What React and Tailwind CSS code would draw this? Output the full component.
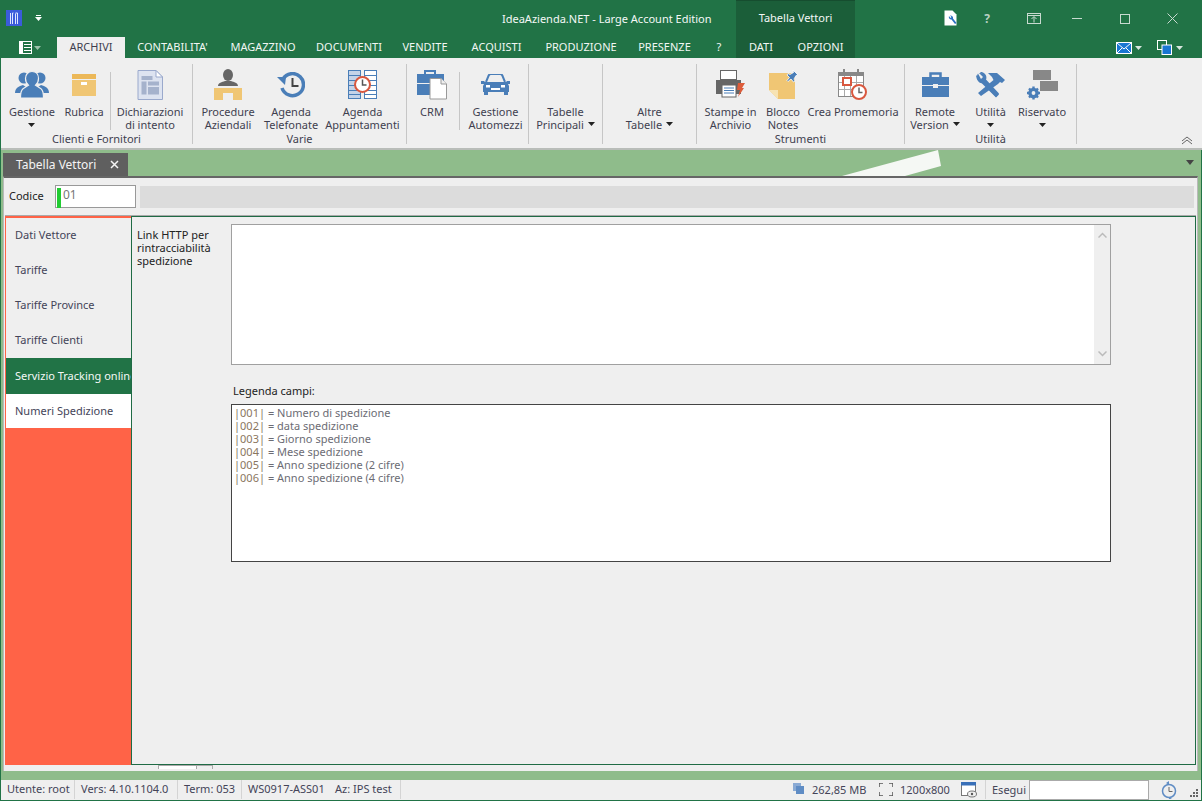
import React from "react";

const B = "#4a7eb8";
const T = "#f0c674";

const Caret = ({ c = "#222" }) => (
  <svg width="7" height="4" viewBox="0 0 7 4" className="inline-block"><path d="M0 0h7L3.5 4z" fill={c} /></svg>
);

const IconPeople = () => (
  <svg width="34" height="30" viewBox="0 0 34 30">
    <g fill={B}>
      <circle cx="9" cy="8" r="5.5" /><circle cx="25" cy="8" r="5.5" />
      <path d="M0 23c0-5 4-7 8-8l3 2v6z" /><path d="M34 23c0-5-4-7-8-8l-3 2v6z" />
    </g>
    <path d="M17 1.5c4 0 6.5 3 6.5 7 0 3-1.500 5.500-3 6.800l5.500 3.500c2 1.500 2.500 5 2.500 9.200H5.500c0-4.200.5-7.700 2.500-9.200l5.500-3.500c-1.500-1.300-3-3.800-3-6.800 0-4 2.500-7 6.500-7z" fill={B} stroke="#efefef" strokeWidth="1.2" />
  </svg>
);
const IconBox = () => (
  <svg width="26" height="24" viewBox="0 0 26 24">
    <rect x="1" y="1" width="24" height="5" fill="#ecb858" />
    <rect x="1" y="7" width="24" height="16" fill={T} />
    <rect x="10" y="9" width="6" height="3" fill="#fff" />
  </svg>
);
const IconDoc = () => (
  <svg width="26" height="30" viewBox="0 0 26 30">
    <path d="M1 .5h18l6.500 6.500v22.500H1z" fill="#dde3f0" stroke="#9aa9cc" />
    <path d="M19 .5V7h6.500z" fill="#fff" stroke="#9aa9cc" />
    <rect x="4.500" y="6" width="11" height="4" fill="#a5b2cc" /><rect x="4.500" y="11.500" width="5" height="13" fill="#a5b2cc" />
    <rect x="11" y="11.500" width="11" height="4" fill="#a5b2cc" /><rect x="11" y="17" width="11" height="7.500" fill="#a5b2cc" />
  </svg>
);
const IconDesk = () => (
  <svg width="29" height="32" viewBox="0 0 29 32">
    <ellipse cx="14" cy="6" rx="5" ry="6" fill="#666" />
    <path d="M4 17c0-3 4-4 7-5h6c3 1 7 2 7 5z" fill="#666" />
    <path d="M0 19h28v12H19v-7H9v7H0z" fill={T} />
  </svg>
);
const IconHistory = () => (
  <svg width="28" height="26" viewBox="0 0 28 26">
    <path d="M6 7a11 11 0 1 1-1 9" fill="none" stroke={B} strokeWidth="3.500" />
    <path d="M0 5h9l-1 8z" fill={B} />
    <path d="M15.500 6v8h6" fill="none" stroke="#444" strokeWidth="2" />
  </svg>
);
const IconPlanner = () => (
  <svg width="29" height="30" viewBox="0 0 29 30">
    <rect x=".5" y=".5" width="12" height="28" fill="#c4d3e8" stroke={B} />
    <rect x="16.500" y=".5" width="12" height="28" fill="#fff" stroke={B} />
    <path d="M1 5.500h11M1 10.500h11M1 15.500h11M1 20.500h11M1 24.500h11M17 5.500h11M17 10.500h11M17 15.500h11M17 20.500h11M17 24.500h11" stroke={B} />
    <circle cx="14.500" cy="14.500" r="7.500" fill="#fff" stroke="#d9583f" strokeWidth="2" />
    <path d="M14.500 9.500v5.500h4" fill="none" stroke="#555" strokeWidth="1.500" />
  </svg>
);
const IconCrm = () => (
  <svg width="30" height="31" viewBox="0 0 30 31">
    <path d="M8 5V2h10v3" fill="none" stroke={B} strokeWidth="2" />
    <rect x="0" y="5" width="27" height="9" fill={B} /><rect x="0" y="15" width="27" height="11" fill={B} />
    <path d="M13 9.500h11l5.500 5.500v15H13z" fill="#fff" stroke="#999" />
    <path d="M24 9.500V15h5.500" fill="#eee" stroke="#999" />
  </svg>
);
const IconCar = () => (
  <svg width="29" height="21" viewBox="0 0 29 21">
    <path d="M5 8l2.500-6c.3-1 1-2 2.500-2h9c1.500 0 2.200 1 2.500 2L24 8" fill="none" stroke={B} strokeWidth="2" />
    <path d="M0 7h3l1 1h21l1-1h3v3h-2l1 2v6h-1v3h-4v-3H7v3H3v-3H2v-6l1-2H0z" fill={B} />
    <rect x="5" y="11" width="4" height="2.500" fill="#fff" /><rect x="20" y="11" width="4" height="2.500" fill="#fff" />
    <rect x="10" y="14" width="9" height="2" fill="#fff" />
  </svg>
);
const IconPrinter = () => (
  <svg width="29" height="29" viewBox="0 0 29 29">
    <rect x="4.500" y=".5" width="16" height="9" fill="#fff" stroke="#666" />
    <path d="M0 10h25v14H0z" fill="#666" />
    <rect x="6" y="15" width="14" height="12" fill="#fff" stroke="#666" />
    <path d="M8 18h10M8 20.500h10M8 23h10" stroke={B} />
    <path d="M22 13h7l-3 5h2l-6 9 2-7h-3z" fill="#dd5c3a" />
  </svg>
);
const IconNote = () => (
  <svg width="31" height="31" viewBox="0 0 31 31">
    <path d="M1 4h26v26H10l-9-9z" fill={T} />
    <path d="M1 21h9v9z" fill="#f7e3b3" />
    <path d="M19 0h12v11H19z" fill="#fff" opacity="0" />
    <path d="M25 1l5 5-2 .5-2 3.500 1 2-1.500 1-2.500-3-3 2.500-1-1 2.500-3-2.500-2.500 1-1.500 2 1 3.500-2z" fill={B} stroke="#fff" strokeWidth=".8" />
  </svg>
);
const IconCal = () => (
  <svg width="30" height="31" viewBox="0 0 30 31">
    <rect x=".5" y="3.500" width="25" height="24" fill="#fff" stroke="#888" />
    <rect x="0" y="3" width="26" height="4" fill="#888" />
    <rect x="5" y="0" width="2" height="5" fill="#888" /><rect x="19" y="0" width="2" height="5" fill="#888" />
    <path d="M6.500 7v20M12.500 7v20M18.500 7v20M1 13.500h24M1 20.500h24" stroke="#aaa" />
    <rect x="5" y="9" width="8" height="7" fill="#fff" stroke="#d9583f" strokeWidth="2" />
    <circle cx="21" cy="23" r="7" fill="#fff" stroke="#d9583f" strokeWidth="2" />
    <path d="M21 18.500v5h3.500" fill="none" stroke="#666" strokeWidth="1.500" />
  </svg>
);
const IconCase = () => (
  <svg width="27" height="25" viewBox="0 0 27 25">
    <path d="M8.500 5V1.500h10V5" fill="none" stroke={B} strokeWidth="2.500" />
    <path d="M0 5h27v8H16v-1h-5v1H0z" fill={B} /><path d="M0 14h11v2h5v-2h11v11H0z" fill={B} />
  </svg>
);
const IconTools = () => (
  <svg width="30" height="26" viewBox="0 0 30 26">
    <path d="M2 1.500a6 6 0 0 0 3 9l15 15 3-3L9 8c1-3-1-7-6-7l4 4-2 2z" fill={B} transform="translate(0 0)" />
    <path d="M0 3l5 5 3-3-4-5c2-.5 5 1 6 3.500.5 1.500.5 3 0 4l13 14-3 3.500L7 11C4 12 .5 9 0 3z" fill={B} />
    <path d="M12 1h9l8 7-3 3-2-1-2 2L5 24l-3-3L17.500 8 16 5z" fill={B} />
  </svg>
);
const IconReserved = () => (
  <svg width="32" height="30" viewBox="0 0 32 30">
    <rect x="7" y="0" width="18" height="10" fill="#888" /><rect x="14" y="11" width="18" height="10" fill="#888" />
    <g fill="none" stroke={B}>
      <circle cx="7.500" cy="23" r="3.600" strokeWidth="3.400" />
      <path d="M7.500 16.500v3M7.500 26.500v3M1 23h3M11 23h3M3 18.500l2 2M10 25.500l2 2M3 27.500l2-2M10 20.500l2-2" strokeWidth="2.400" />
    </g>
  </svg>
);

const Rb = ({ w, icon, lines, caret, caretLine, iconH = 32 }) => (
  <div className={`${w} flex flex-col items-center shrink-0`}>
    <div className="h-[38px] flex items-center justify-center pt-[3px]">{icon}</div>
    <div className="mt-[3px] text-center leading-[13px] text-[#3f3f4f]">
      {lines.map((l, i) => (
        <div key={i} className="whitespace-nowrap h-[13px]">
          {l}
          {caret && caretLine === i && <span className="ml-[4px] relative top-[-2px]"><Caret /></span>}
        </div>
      ))}
      {caret && caretLine === undefined && <div className="h-[13px] flex items-center justify-center"><Caret /></div>}
    </div>
  </div>
);

const Sep = () => <div className="w-px h-[58px] mt-[8px] bg-[#c6c6c6] mx-[2px] shrink-0" />;

const Group = ({ w, label, children, last }) => (
  <div className={`${w} h-[80px] mt-[6px] flex flex-col border-r border-[#c6c6c6] shrink-0 relative`}>
    <div className="flex h-[67px]">{children}</div>
    {label && <div className="text-center leading-[13px] mt-[1px] text-[#3f3f4f]">{label}</div>}
  </div>
);

const Tab = ({ t, w, active }) => (
  <div className={`${w} h-[21px] shrink-0 flex items-center justify-center ${active ? "bg-[#efefef] text-[#3f3f4f]" : "text-[#f2f7f4]"}`}>{t}</div>
);

const Side = ({ t, cls = "bg-[#efefef] text-[#444458]", h = "h-[35px]" }) => (
  <div className={`${h} ${cls} pl-[9px] flex items-center whitespace-nowrap`}>{t}</div>
);

const legend = [
  ["|001|", "= Numero di spedizione"],
  ["|002|", "= data spedizione"],
  ["|003|", "= Giorno spedizione"],
  ["|004|", "= Mese spedizione"],
  ["|005|", "= Anno spedizione (2 cifre)"],
  ["|006|", "= Anno spedizione (4 cifre)"],
];

const StatusCell = ({ w, children, border = true }) => (
  <div className={`${w} h-[19px] flex items-center shrink-0 pl-[6px] whitespace-nowrap ${border ? "border-r border-[#d4d4d4]" : ""}`}>{children}</div>
);

export default function App() {
  return (
    <div className="w-[1202px] h-[801px] overflow-hidden bg-[#217346] flex flex-col text-[11px] font-['Noto_Sans',sans-serif] select-none">
      {/* title bar */}
      <div className="h-[37px] flex shrink-0">
        <div className="w-[736px] flex items-center relative text-[#f4f8f6]">
          <div className="ml-[6px] mt-[-2px] w-[16px] h-[16px] bg-[#3b5bdb] flex items-center justify-center">
            <svg width="10" height="12" viewBox="0 0 10 12"><path d="M1.500 12V1M3.500 12V1h1M6.500 12V1.500M6.500 1h2v11" stroke="#dfe6ff" fill="none" /></svg>
          </div>
          <div className="ml-[13px] mt-[-2px] flex flex-col items-center gap-[1px]">
            <div className="w-[5px] h-px bg-white" />
            <Caret c="#fff" />
          </div>
          <div className="ml-[460px] mt-[1px] whitespace-nowrap">IdeaAzienda.NET - Large Account Edition</div>
        </div>
        <div className="w-[119px] bg-[#1b5e39] border-t border-[#164d2f] flex items-center justify-center text-[#f4f8f6] pb-[2px]">Tabella Vettori</div>
        <div className="flex-1 flex items-center relative">
          <div className="ml-[89px] mt-[-1px] w-[14px] h-[16px]">
            <svg width="14" height="16" viewBox="0 0 14 16"><path d="M.5.500h8l4 4v11H.5z" fill="#fff" /><path d="M5 6a2.500 2.500 0 0 0 2.500 3.500L11 14l1.500-1L9 8.500A2.500 2.500 0 0 0 6 5.500l1.500 1.500L6.500 8z" fill="#2a6fc0" /></svg>
          </div>
          <div className="ml-[25px] text-[12px] font-bold text-[#b8d0c2] w-[8px] text-center">?</div>
          <div className="ml-[36px] w-[14px]">
            <svg width="14" height="12" viewBox="0 0 14 12"><rect x=".5" y=".5" width="13" height="10" fill="none" stroke="#c8dad0" /><path d="M1 2.500h12M7 9.500V4M4.500 6L7 3.500 9.500 6" stroke="#c8dad0" fill="none" /></svg>
          </div>
          <div className="ml-[31px] w-[10px] h-px bg-[#c8dad0]" />
          <div className="ml-[38px] w-[10px] h-[10px] border border-[#c8dad0]" />
          <div className="ml-[37px] w-[11px]">
            <svg width="11" height="11" viewBox="0 0 11 11"><path d="M.5.500l10 10M10.500.500l-10 10" stroke="#c8dad0" /></svg>
          </div>
        </div>
      </div>

      {/* tabs row */}
      <div className="h-[21px] flex shrink-0">
        <div className="w-[57px] flex items-center justify-start shrink-0 pl-[19px] gap-[2px]">
          <svg width="13" height="13" viewBox="0 0 13 13"><rect x=".5" y=".5" width="12" height="12" fill="none" stroke="#fff" /><rect x="1" y="1" width="3" height="11" fill="#fff" /><path d="M5 3.500h7M5 6.500h7M5 9.500h7" stroke="#fff" /></svg>
          <Caret c="#9cc0aa" />
        </div>
        <Tab t="ARCHIVI" w="w-[68px]" active />
        <Tab t="CONTABILITA'" w="w-[95px]" />
        <Tab t="MAGAZZINO" w="w-[86px]" />
        <Tab t="DOCUMENTI" w="w-[86px]" />
        <Tab t="VENDITE" w="w-[66px]" />
        <Tab t="ACQUISTI" w="w-[77px]" />
        <Tab t="PRODUZIONE" w="w-[92px]" />
        <Tab t="PRESENZE" w="w-[75px]" />
        <Tab t="?" w="w-[34px]" />
        <div className="w-[119px] bg-[#1b5e39] flex text-[#f2f7f4] shrink-0">
          <div className="w-[50px] flex items-center justify-center">DATI</div>
          <div className="w-[69px] flex items-center justify-center">OPZIONI</div>
        </div>
        <div className="flex-1 flex items-center justify-end pr-[19px]">
          <svg width="16" height="12" viewBox="0 0 16 12"><rect width="16" height="12" fill="#1976d2" /><rect x=".5" y=".5" width="15" height="11" fill="none" stroke="#fff" /><path d="M1 1l7 6 7-6M1 11l5-5M15 11l-5-5" stroke="#fff" fill="none" /></svg>
          <span className="ml-[3px]"><Caret c="#d8e6de" /></span>
          <div className="ml-[15px]">
            <svg width="15" height="15" viewBox="0 0 15 15"><rect x=".5" y=".5" width="9" height="9" fill="#217346" stroke="#fff" /><rect x="5" y="5" width="9.500" height="9.500" fill="#1976d2" stroke="#fff" /></svg>
          </div>
          <span className="ml-[4px]"><Caret c="#d8e6de" /></span>
        </div>
      </div>

      {/* ribbon */}
      <div className="h-[92px] ml-px w-[1201px] bg-[#efefef] flex shrink-0 border-b-2 border-[#b9bdb9] relative">
        <Group w="w-[192px]" label="Clienti e Fornitori">
          <div className="w-[3px]" />
          <Rb w="w-[56px]" icon={<IconPeople />} lines={["Gestione"]} caret />
          <Rb w="w-[48px]" icon={<IconBox />} lines={["Rubrica"]} />
          <Sep />
          <Rb w="w-[74px]" icon={<IconDoc />} lines={["Dichiarazioni", "di intento"]} />
        </Group>
        <Group w="w-[214px]" label="Varie">
          <Rb w="w-[70px]" icon={<IconDesk />} lines={["Procedure", "Aziendali"]} />
          <Rb w="w-[56px]" icon={<IconHistory />} lines={["Agenda", "Telefonate"]} />
          <Rb w="w-[87px]" icon={<IconPlanner />} lines={["Agenda", "Appuntamenti"]} />
        </Group>
        <Group w="w-[122px]">
          <Rb w="w-[50px]" icon={<IconCrm />} lines={["CRM"]} />
          <Sep />
          <Rb w="w-[67px]" icon={<IconCar />} lines={["Gestione", "Automezzi"]} />
        </Group>
        <Group w="w-[74px]">
          <Rb w="w-[73px]" icon={null} lines={["Tabelle", "Principali"]} caret caretLine={1} />
        </Group>
        <Group w="w-[94px]">
          <Rb w="w-[93px]" icon={null} lines={["Altre", "Tabelle"]} caret caretLine={1} />
        </Group>
        <Group w="w-[208px]" label="Strumenti">
          <Rb w="w-[67px]" icon={<IconPrinter />} lines={["Stampe in", "Archivio"]} />
          <Rb w="w-[38px]" icon={<IconNote />} lines={["Blocco", "Notes"]} />
          <Rb w="w-[102px]" icon={<IconCal />} lines={["Crea Promemoria"]} />
        </Group>
        <Group w="w-[172px]" label="Utilità">
          <Rb w="w-[60px]" icon={<IconCase />} lines={["Remote", "Version"]} caret caretLine={1} />
          <Rb w="w-[51px]" icon={<IconTools />} lines={["Utilità"]} caret />
          <Rb w="w-[52px]" icon={<IconReserved />} lines={["Riservato"]} caret />
        </Group>
        <div className="flex-1 flex items-end justify-end pr-[9px] pb-[3px]">
          <svg width="12" height="9" viewBox="0 0 12 9"><path d="M1 5l5-4 5 4M1 8l5-4 5 4" fill="none" stroke="#666" /></svg>
        </div>
      </div>

      {/* workspace */}
      <div className="flex-1 ml-px mr-px bg-[#8fbc8b] flex flex-col min-h-0">
        {/* doc tabs strip */}
        <div className="h-[26px] shrink-0 flex items-end relative pl-[2px]">
          <div className="w-[125px] h-[23px] bg-[#5f5f5f] text-[#f4f4f4] flex items-center pl-[13px] text-[12px]">
            <span className="whitespace-nowrap">Tabella Vettori</span>
            <svg className="ml-[14px]" width="9" height="9" viewBox="0 0 9 9"><path d="M1 1l7 7M8 1L1 8" stroke="#f4f4f4" strokeWidth="1.500" /></svg>
          </div>
          <svg className="absolute left-[841px] top-0" width="100" height="26" viewBox="0 0 100 26"><path d="M96 0l3 16-36 10H0z" fill="#f5f8f4" /></svg>
          <div className="absolute right-[7px] top-[10px]"><svg width="8" height="5" viewBox="0 0 8 5"><path d="M0 0h8L4 5z" fill="#444" /></svg></div>
        </div>

        {/* form */}
        <div className="ml-[2px] mr-[3px] h-[595px] shrink-0 bg-[#efefef] border-t-2 border-[#666] border-x border-x-[#b9b9b9] flex flex-col">
          <div className="h-[38px] shrink-0 flex items-center border-b border-[#aaa] pl-[4px] mx-px">
            <span className="w-[46px] text-[#222]">Codice</span>
            <div className="w-[81px] h-[23px] border border-[#999] bg-white flex pt-[1px] pl-px relative">
              <div className="w-[4px] h-[20px] mt-[1px] bg-[#22cc33]" />
              <span className="ml-[2px] leading-[15px] text-[#777] text-[12px]">01</span>
            </div>
            <div className="ml-[4px] w-[1054px] h-[22px] bg-[#dcdcdc]" />
          </div>

          <div className="flex-1 flex min-h-0 ml-px">
            <div className="w-[126px] shrink-0 bg-[#ff6347] pl-[1px] pt-px flex flex-col">
              <Side t="Dati Vettore" h="h-[35px] mt-[1px]" />
              <Side t="Tariffe" />
              <Side t="Tariffe Province" />
              <Side t="Tariffe Clienti" />
              <Side t="Servizio Tracking online" cls="bg-[#217346] text-[#f4f8f6]" h="h-[36px]" />
              <Side t="Numeri Spedizione" cls="bg-white text-[#444458]" h="h-[34px]" />
            </div>
            <div className="flex-1 border border-[#1f6b45] mr-px bg-[#efefef] pt-[7px] pl-[99px]">
              <div className="flex relative">
                <div className="absolute left-[-94px] top-[4px] leading-[13px] text-[#222] w-[80px]">Link HTTP per rintracciabilità spedizione</div>
                <div className="w-[880px] h-[141px] bg-white border border-[#a0a0a0] flex justify-end">
                  <div className="w-[16px] bg-[#efefef] flex flex-col justify-between items-center py-[7px]">
                    <svg width="9" height="6" viewBox="0 0 9 6"><path d="M.5 5.500l4-4 4 4" fill="none" stroke="#bbb" strokeWidth="1.500" /></svg>
                    <svg width="9" height="6" viewBox="0 0 9 6"><path d="M.5.500l4 4 4-4" fill="none" stroke="#bbb" strokeWidth="1.500" /></svg>
                  </div>
                </div>
              </div>
              <div className="pl-[2px] mt-[19px] leading-[13px] text-[#222]">Legenda campi:</div>
              <div className="mt-[7px] w-[880px] h-[158px] bg-white border border-[#444] pl-[2px] pt-[1px] leading-[13px] text-[#6c6c74]">
                {legend.map(([a, b]) => (
                  <div key={a} className="h-[13px] whitespace-nowrap">
                    <span className="text-[#8a7660]">{a}</span> {b}
                  </div>
                ))}
              </div>
            </div>
          </div>

          <div className="h-[6px] shrink-0 bg-[#efefef] flex pl-[154px]">
            <div className="w-[39px] h-[4px] bg-white border-x border-t border-[#aaa]" />
            <div className="w-[16px] h-[4px] bg-[#efefef] border-r border-t border-[#aaa]" />
          </div>
        </div>
        <div className="flex-1" />
      </div>

      {/* status bar */}
      <div className="h-[21px] shrink-0 ml-px mr-px bg-[#efefef] flex items-start text-[#444458] border-b border-[#217346] text-[11px]">
        <StatusCell w="w-[74px]">Utente: root</StatusCell>
        <StatusCell w="w-[103px]">Vers: 4.10.1104.0</StatusCell>
        <StatusCell w="w-[64px]">Term: 053</StatusCell>
        <StatusCell w="w-[159px]">
          <span className="w-[87px]">WS0917-ASS01</span><span>Az: IPS test</span>
        </StatusCell>
        <div className="w-[392px]" />
        <div className="w-[12px] h-[12px] relative shrink-0 mt-[3px]">
          <div className="absolute left-0 top-0 w-[8px] h-[8px] bg-[#8aaad4]" />
          <div className="absolute left-[3px] top-[3px] w-[8px] h-[8px] bg-[#5f8cc4]" />
        </div>
        <span className="ml-[7px] mt-[2px] w-[67px] whitespace-nowrap">262,85 MB</span>
        <svg className="mt-[3px] shrink-0" width="14" height="13" viewBox="0 0 14 13"><path d="M0 4V0h4M10 0h4v4M14 9v4h-4M4 13H0V9" fill="none" stroke="#555" strokeWidth="1.500" /></svg>
        <span className="ml-[7px] mt-[2px] w-[61px] whitespace-nowrap">1200x800</span>
        <svg className="mt-[2px] shrink-0" width="16" height="16" viewBox="0 0 16 16"><rect x=".5" y=".5" width="14" height="13" fill="#fff" stroke="#777" /><rect x="0" y="0" width="15" height="3.500" fill="#3a70b8" /><ellipse cx="11" cy="12" rx="4.500" ry="3" fill="#efefef" stroke="#777" /><circle cx="11" cy="12" r="1.200" fill="#555" /></svg>
        <div className="w-px h-[19px] bg-[#d4d4d4] ml-[8px] shrink-0" />
        <span className="ml-[6px] mt-[2px] w-[37px]">Esegui</span>
        <div className="w-[120px] h-[20px] bg-white border border-[#aaa] shrink-0" />
        <svg className="ml-[12px] mt-[1px] shrink-0" width="16" height="18" viewBox="0 0 16 18"><circle cx="8" cy="10" r="6.500" fill="none" stroke="#5f8cc4" strokeWidth="1.500" /><path d="M8 6v4.500h3.500" fill="none" stroke="#666" /><path d="M5 2l3-2v4zM11 18l-3-2v4z" fill="#5f8cc4" /></svg>
        <div className="flex-1 h-[19px] flex items-end justify-end pr-[2px] pb-[1px]">
          <svg width="9" height="9" viewBox="0 0 9 9" fill="#666"><rect x="6" y="0" width="2" height="2" /><rect x="3" y="3" width="2" height="2" /><rect x="6" y="3" width="2" height="2" /><rect x="0" y="6" width="2" height="2" /><rect x="3" y="6" width="2" height="2" /><rect x="6" y="6" width="2" height="2" /></svg>
        </div>
      </div>
    </div>
  );
}
